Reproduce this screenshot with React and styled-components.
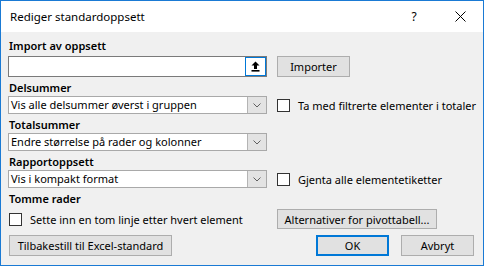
import React from "react";
import styled, { createGlobalStyle } from "styled-components";

const Global = createGlobalStyle`
  html, body { margin: 0; padding: 0; background: #ffffff; }
  body { font-family: "Noto Sans", "Open Sans", sans-serif; font-size: 11px; color: #000; }
  * { box-sizing: border-box; }
`;

const Dialog = styled.div`
  width: 484px;
  height: 266px;
  border: 1px solid #1a7ad4;
  background: #f0f0f0;
  display: flex;
  flex-direction: column;
`;

const TitleBar = styled.div`
  height: 31px;
  background: #ffffff;
  display: flex;
  align-items: center;
  padding-left: 9px;
  font-size: 11.5px;
`;

const TitleText = styled.div`
  flex: 1;
`;

const TitleButton = styled.div`
  width: ${(p) => p.$w}px;
  height: 31px;
  display: flex;
  align-items: center;
  justify-content: center;
  font-size: 12px;
`;

const Body = styled.div`
  padding: 5px 8px 0 7px;
  display: flex;
  flex-direction: column;
`;

const Label = styled.div`
  height: 17px;
  line-height: 17px;
  font-weight: 600;
  margin-top: ${(p) => p.$mt ?? 2}px;
  padding-left: 1px;
`;

const Row = styled.div`
  display: grid;
  grid-template-columns: 259px 1fr;
  column-gap: 10px;
  align-items: center;
  height: ${(p) => p.$h}px;
  margin-top: ${(p) => p.$mt ?? 0}px;
`;

const InputBox = styled.div`
  height: 21px;
  background: #fff;
  border: 1px solid #7a7a7a;
  display: flex;
  justify-content: flex-end;
`;

const UploadBtn = styled.div`
  width: 21px;
  height: 19px;
  border: 1px solid #0078d7;
  display: flex;
  align-items: center;
  justify-content: center;
`;

const Button = styled.div`
  height: ${(p) => p.$h ?? 21}px;
  width: ${(p) => p.$w}px;
  background: #e1e1e1;
  border: ${(p) => (p.$default ? "2px solid #0078d7" : "1px solid #adadad")};
  display: flex;
  align-items: center;
  justify-content: center;
  white-space: nowrap;
`;

const Select = styled.div`
  height: 18px;
  background: #fff;
  border: 1px solid #a9a9a9;
  display: flex;
  align-items: stretch;
`;

const SelectText = styled.div`
  flex: 1;
  line-height: 16px;
  padding-left: 2px;
  white-space: nowrap;
  overflow: hidden;
`;

const SelectArrow = styled.div`
  width: 19px;
  background: #e3e3e3;
  border: 1px solid #b4b4b4;
  border-right: none;
  border-top: none;
  border-bottom: none;
  display: flex;
  align-items: center;
  justify-content: center;
`;

const CheckRow = styled.label`
  display: flex;
  align-items: center;
  gap: 8px;
  white-space: nowrap;
  padding-left: ${(p) => p.$pl ?? 0}px;
`;

const Box = styled.span`
  width: 13px;
  height: 13px;
  border: 1px solid #333333;
  background: #fff;
  flex: none;
`;

const BottomRow = styled.div`
  display: flex;
  align-items: center;
  margin-top: 6px;
  padding-left: 1px;
`;

const Spacer = styled.div`
  flex: 1;
`;

const ButtonGroup = styled.div`
  display: flex;
  gap: 12px;
  margin-right: 1px;
`;

const Chevron = () => (
  <svg width="8" height="5" viewBox="0 0 8 5">
    <path d="M0.5 0.5 L4 4 L7.5 0.5" fill="none" stroke="#606060" strokeWidth="1" />
  </svg>
);

const UploadIcon = () => (
  <svg width="9" height="11" viewBox="0 0 9 11">
    <path d="M4.5 0.5 L0.5 4.5 H3 V8 H6 V4.5 H8.5 Z" fill="#000" />
    <rect x="0.5" y="9" width="8" height="1.6" fill="#000" />
  </svg>
);

const CloseIcon = () => (
  <svg width="11" height="11" viewBox="0 0 11 11">
    <path d="M0.5 0.5 L10.5 10.5 M10.5 0.5 L0.5 10.5" stroke="#000" strokeWidth="1" />
  </svg>
);

const Dropdown = ({ value }) => (
  <Select>
    <SelectText>{value}</SelectText>
    <SelectArrow>
      <Chevron />
    </SelectArrow>
  </Select>
);

const Checkbox = ({ children, pl }) => (
  <CheckRow $pl={pl}>
    <Box />
    <span>{children}</span>
  </CheckRow>
);

export default function App() {
  return (
    <>
      <Global />
      <Dialog>
        <TitleBar>
          <TitleText>Rediger standardoppsett</TitleText>
          <TitleButton $w={46}>?</TitleButton>
          <TitleButton $w={46}>
            <CloseIcon />
          </TitleButton>
        </TitleBar>
        <Body>
          <Label $mt={0}>Import av oppsett</Label>
          <Row $h={21} $mt={2}>
            <InputBox>
              <UploadBtn>
                <UploadIcon />
              </UploadBtn>
            </InputBox>
            <Button $w={73}>Importer</Button>
          </Row>
          <Label>Delsummer</Label>
          <Row $h={18}>
            <Dropdown value="Vis alle delsummer øverst i gruppen" />
            <Checkbox>Ta med filtrerte elementer i totaler</Checkbox>
          </Row>
          <Label>Totalsummer</Label>
          <Row $h={18}>
            <Dropdown value="Endre størrelse på rader og kolonner" />
            <div />
          </Row>
          <Label>Rapportoppsett</Label>
          <Row $h={18}>
            <Dropdown value="Vis i kompakt format" />
            <Checkbox>Gjenta alle elementetiketter</Checkbox>
          </Row>
          <Label>Tomme rader</Label>
          <Row $h={20} $mt={2}>
            <Checkbox pl={1}>Sette inn en tom linje etter hvert element</Checkbox>
            <Button $w={160} $h={20}>Alternativer for pivottabell...</Button>
          </Row>
          <BottomRow>
            <Button $w={163}>Tilbakestill til Excel-standard</Button>
            <Spacer />
            <ButtonGroup>
              <Button $w={73} $default>OK</Button>
              <Button $w={73}>Avbryt</Button>
            </ButtonGroup>
          </BottomRow>
        </Body>
      </Dialog>
    </>
  );
}
